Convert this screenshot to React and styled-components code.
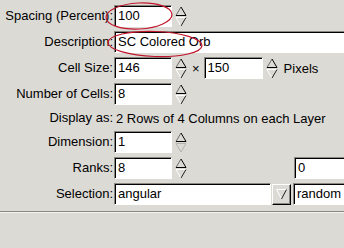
import React from "react";
import styled, { createGlobalStyle } from "styled-components";

const Global = createGlobalStyle`
  html, body { margin: 0; padding: 0; background: #dcdad5; overflow: hidden; }
  body { font-family: "Liberation Sans", Arial, sans-serif; font-size: 13px; color: #000; }
`;

const Page = styled.div`
  position: relative;
  width: 344px;
  height: 248px;
  overflow: hidden;
  background: #dcdad5;
`;

const Form = styled.div`
  display: grid;
  grid-template-columns: 113px 1fr;
  column-gap: 1px;
  row-gap: 4px;
  padding-top: 5px;
`;

const Label = styled.div`
  text-align: right;
  white-space: nowrap;
  height: ${(p) => (p.$short ? "18px" : "22px")};
  line-height: ${(p) => (p.$short ? "18px" : "22px")};
`;

const Line = styled.div`
  display: flex;
  align-items: center;
  height: ${(p) => (p.$short ? "18px" : "22px")};
  white-space: nowrap;
`;

const Input = styled.div`
  box-sizing: border-box;
  flex: none;
  width: ${(p) => p.$w}px;
  height: 22px;
  background: #fff;
  border-top: 1px solid #8a8883;
  border-left: 1px solid #8a8883;
  border-right: 1px solid #fff;
  border-bottom: 1px solid #fff;
  box-shadow: inset 1px 1px 0 #000;
  padding: 0 0 0 3px;
  line-height: 20px;
  white-space: nowrap;
  overflow: hidden;
  margin-left: ${(p) => p.$ml || 0}px;
`;

const SpinBox = styled.svg`
  flex: none;
  display: block;
  margin-left: 3px;
`;

const Times = styled.span`
  margin: 0 4px 0 5px;
`;

const Text = styled.span`
  margin-left: ${(p) => p.$ml || 0}px;
`;

const DropBtn = styled.div`
  box-sizing: border-box;
  flex: none;
  width: 19px;
  height: 21px;
  margin-left: 1px;
  background: #dcdad5;
  border-top: 1px solid #fff;
  border-left: 1px solid #fff;
  border-right: 1px solid #000;
  border-bottom: 1px solid #000;
  box-shadow: inset -1px -1px 0 #8a8883;
  display: flex;
  align-items: center;
  justify-content: center;
`;

const Separator = styled.div`
  margin-top: 6px;
  height: 1px;
  background: #8a8883;
  border-bottom: 1px solid #f4f3f0;
`;

const Marks = styled.svg`
  position: absolute;
  left: 0;
  top: 0;
  pointer-events: none;
`;

function Spinner({ disabledDown }) {
  const dn = disabledDown ? "#b4b2ac" : "#222";
  const dnL = disabledDown ? "#b4b2ac" : "#fff";
  return (
    <SpinBox width="12" height="22" viewBox="0 0 12 22">
      <line x1="1" y1="10.5" x2="6" y2="2" stroke="#6e6c68" strokeWidth="1" />
      <line x1="6" y1="2" x2="11" y2="10.5" stroke="#000" strokeWidth="1" />
      <line x1="1" y1="10.5" x2="11" y2="10.5" stroke="#000" strokeWidth="1" />
      <line x1="1" y1="12.5" x2="11" y2="12.5" stroke={dnL} strokeWidth="1" />
      <line x1="1" y1="12.5" x2="6" y2="21" stroke={dnL} strokeWidth="1" />
      <line x1="11" y1="12.5" x2="6" y2="21" stroke={dn} strokeWidth="1" />
    </SpinBox>
  );
}

function DropArrow() {
  return (
    <svg width="11" height="12" viewBox="0 0 11 12">
      <line x1="0.5" y1="1.5" x2="10.5" y2="1.5" stroke="#fff" />
      <line x1="0.5" y1="1.5" x2="5.5" y2="11" stroke="#fff" />
      <line x1="10.5" y1="1.5" x2="5.5" y2="11" stroke="#222" />
    </svg>
  );
}

export default function App() {
  return (
    <Page>
      <Global />
      <Form>
        <Label>Spacing (Percent):</Label>
        <Line>
          <Input $w={58}>100</Input>
          <Spinner />
        </Line>

        <Label>Description:</Label>
        <Line>
          <Input $w={240}>SC Colored Orb</Input>
        </Line>

        <Label>Cell Size:</Label>
        <Line>
          <Input $w={58}>146</Input>
          <Spinner />
          <Times>×</Times>
          <Input $w={59}>150</Input>
          <Spinner />
          <Text $ml={6}>Pixels</Text>
        </Line>

        <Label>Number of Cells:</Label>
        <Line>
          <Input $w={58}>8</Input>
          <Spinner />
        </Line>

        <Label $short>Display as:</Label>
        <Line $short>
          <Text $ml={2}>2 Rows of 4 Columns on each Layer</Text>
        </Line>

        <Label>Dimension:</Label>
        <Line>
          <Input $w={58}>1</Input>
          <Spinner disabledDown />
        </Line>

        <Label>Ranks:</Label>
        <Line>
          <Input $w={58}>8</Input>
          <Spinner />
          <Input $w={60} $ml={107}>0</Input>
        </Line>

        <Label>Selection:</Label>
        <Line>
          <Input $w={157}>angular</Input>
          <DropBtn>
            <DropArrow />
          </DropBtn>
          <Input $w={60} $ml={2}>random</Input>
        </Line>
      </Form>
      <Separator />
      <Marks width="344" height="248" viewBox="0 0 344 248">
        <ellipse cx="139" cy="16" rx="33" ry="13" fill="none" stroke="#c0162c" strokeWidth="1.2" transform="rotate(-3 139 16)" />
        <ellipse cx="155" cy="44" rx="47" ry="12.5" fill="none" stroke="#c0162c" strokeWidth="1.2" transform="rotate(2 155 44)" />
      </Marks>
    </Page>
  );
}
